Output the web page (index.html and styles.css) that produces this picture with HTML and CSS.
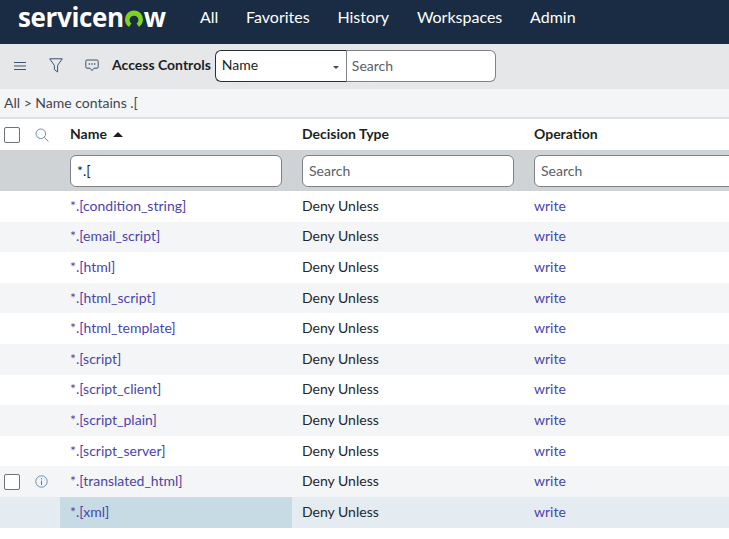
FILE: index.html
```html
<!DOCTYPE html>
<html lang="en">
<head>
<meta charset="utf-8">
<title>Access Controls</title>
<link rel="stylesheet" href="styles.css">
</head>
<body>
<header class="topbar">
  <div class="logo">servicen<svg class="logo-o" viewBox="0 0 20 20" width="20" height="20"><path d="M5 18A9 9 0 1 1 15 18L12.6 14.6A4.4 4.4 0 1 0 7.4 14.6Z" fill="#7ed321"/></svg>w</div>
  <nav class="nav"><span>All</span><span>Favorites</span><span>History</span><span>Workspaces</span><span>Admin</span></nav>
</header>
<div class="toolbar">
  <svg class="tool-menu" width="12" height="10" viewBox="0 0 12 10"><path d="M0 1.5H12M0 5H12M0 8.5H12" stroke="#3e5570" stroke-width="1.1" fill="none"/></svg>
  <svg class="tool-filter" width="14" height="15" viewBox="0 0 14 15"><path d="M.7.8H13.3L8.6 7.4V14L5.4 11.6V7.4Z" stroke="#3e5570" stroke-width="1" fill="none"/></svg>
  <svg class="tool-chat" width="14" height="13" viewBox="0 0 14 13"><path d="M2 1H12A1.2 1.2 0 0 1 13.2 2.2V8A1.2 1.2 0 0 1 12 9.2H9L7 11.6 5 9.2H2A1.2 1.2 0 0 1 .8 8V2.2A1.2 1.2 0 0 1 2 1Z" stroke="#3e5570" stroke-width="1" fill="none"/><path d="M3.7 5H5M6.4 5H7.7M9 5H10.3" stroke="#3e5570" stroke-width="1.3"/></svg>
  <span class="title">Access Controls</span>
  <div class="search-group">
    <div class="select">Name<span class="caret"></span></div>
    <div class="search-box">Search</div>
  </div>
</div>
<div class="breadcrumb">All &gt; Name contains .[</div>
<table class="list">
  <colgroup><col class="c-check"><col class="c-icon"><col class="c-data"><col class="c-data"><col></colgroup>
  <thead>
    <tr class="head-row">
      <th><span class="checkbox"></span></th>
      <th><svg class="ic-search" width="14" height="14" viewBox="0 0 14 14"><circle cx="5.8" cy="5.8" r="4.8" stroke="#6b8fb5" fill="none"/><path d="M9.3 9.3L13.4 13.4" stroke="#6b8fb5"/></svg></th>
      <th class="th-text">Name<span class="sort-up"></span></th>
      <th class="th-text">Decision Type</th>
      <th class="th-text">Operation</th>
    </tr>
    <tr class="filter-row">
      <td></td><td></td>
      <td><div class="field value">*.[</div></td>
      <td><div class="field">Search</div></td>
      <td class="clip"><div class="field wide">Search</div></td>
    </tr>
  </thead>
  <tbody>
    <tr><td></td><td></td><td class="link">*.[condition_string]</td><td class="plain">Deny Unless</td><td class="link">write</td></tr>
    <tr><td></td><td></td><td class="link">*.[email_script]</td><td class="plain">Deny Unless</td><td class="link">write</td></tr>
    <tr><td></td><td></td><td class="link">*.[html]</td><td class="plain">Deny Unless</td><td class="link">write</td></tr>
    <tr><td></td><td></td><td class="link">*.[html_script]</td><td class="plain">Deny Unless</td><td class="link">write</td></tr>
    <tr><td></td><td></td><td class="link">*.[html_template]</td><td class="plain">Deny Unless</td><td class="link">write</td></tr>
    <tr><td></td><td></td><td class="link">*.[script]</td><td class="plain">Deny Unless</td><td class="link">write</td></tr>
    <tr><td></td><td></td><td class="link">*.[script_client]</td><td class="plain">Deny Unless</td><td class="link">write</td></tr>
    <tr><td></td><td></td><td class="link">*.[script_plain]</td><td class="plain">Deny Unless</td><td class="link">write</td></tr>
    <tr><td></td><td></td><td class="link">*.[script_server]</td><td class="plain">Deny Unless</td><td class="link">write</td></tr>
    <tr>
      <td><span class="checkbox"></span></td>
      <td><svg class="ic-info" width="13" height="13" viewBox="0 0 13 13"><circle cx="6.5" cy="6.5" r="5.7" stroke="#6b8fb5" fill="none"/><path d="M6.5 5.6V10" stroke="#5f7f9f" stroke-width="1.1"/><path d="M6.5 3V4.3" stroke="#5f7f9f" stroke-width="1.1"/></svg></td>
      <td class="link">*.[translated_html]</td><td class="plain">Deny Unless</td><td class="link">write</td>
    </tr>
    <tr class="selected"><td></td><td></td><td class="link sel-cell">*.[xml]</td><td class="plain">Deny Unless</td><td class="link">write</td></tr>
  </tbody>
</table>
</body>
</html>
```
FILE: styles.css
```css
* { box-sizing: border-box; }
html, body { margin: 0; padding: 0; }
body {
  width: 729px;
  height: 539px;
  overflow: hidden;
  background: #fff;
  color: #1b1f24;
  font-family: Lato, "Liberation Sans", sans-serif;
  font-size: 14px;
}

.topbar {
  display: flex;
  align-items: flex-start;
  height: 44px;
  background: #1a2c43;
  color: #fff;
}
.logo {
  display: flex;
  align-items: center;
  margin: 0 0 0 18px;
  width: 182px;
  height: 34px;
  font-family: "Open Sans", sans-serif;
  font-size: 26px;
  font-weight: 700;
  letter-spacing: -0.35px;
  line-height: 34px;
}
.logo-o { margin: 3px 0 0 0; flex: none; }
.nav {
  display: flex;
  gap: 27.75px;
  font-size: 16px;
  line-height: 34px;
}

.toolbar {
  display: flex;
  align-items: center;
  height: 45px;
  padding: 0 0 2px 14px;
  background: #e6e7e9;
}
.tool-menu { margin-right: 23px; }
.tool-filter { margin-right: 22px; }
.tool-chat { margin-right: 13px; }
.title {
  margin-right: 4px;
  padding-bottom: 2px;
  font-weight: 700;
  font-size: 14px;
  white-space: nowrap;
}
.search-group { display: flex; }
.select, .search-box {
  height: 32px;
  background: #fff;
  border: 1px solid #7e8288;
  font-size: 14px;
}
.select {
  position: relative;
  width: 132px;
  padding-left: 6px;
  border: 1px solid #2a2f35;
  border-right-color: #7e8288;
  border-radius: 6px 0 0 6px;
  line-height: 27px;
}
.caret {
  position: absolute;
  right: 7px;
  top: 15px;
  border: 3px solid transparent;
  border-top: 3px solid #3e4650;
  border-bottom: 0;
}
.search-box {
  width: 150px;
  margin-left: -1px;
  padding-left: 6px;
  border-left: 0;
  border-radius: 0 6px 6px 0;
  color: #5a6068;
  line-height: 29px;
}

.breadcrumb {
  height: 30px;
  padding-left: 4px;
  background: #f4f5f7;
  border-bottom: 2px solid #dfe1e4;
  line-height: 27px;
  color: #3f4650;
  font-size: 14px;
}

.list {
  width: 729px;
  table-layout: fixed;
  border-collapse: collapse;
}
.c-check { width: 28px; }
.c-icon { width: 32px; }
.c-data { width: 232px; }
.list th, .list td {
  padding: 0 0 0 10px;
  text-align: left;
  white-space: nowrap;
}
.list th:first-child, .list td:first-child { padding-left: 4px; }
.list th:nth-child(2), .list td:nth-child(2) { padding-left: 7px; }
.list td.link, .list td.plain, .list th.th-text { padding-bottom: 2px; }
.head-row { height: 31px; }
.head-row th { font-weight: 700; font-size: 14px; vertical-align: middle; }
.sort-up {
  display: inline-block;
  margin-left: 6px;
  vertical-align: 2px;
  border: 5px solid transparent;
  border-bottom: 5px solid #1b1f24;
  border-top: 0;
}
.checkbox {
  display: block;
  width: 16px;
  height: 16px;
  background: #fff;
  border: 1px solid #6d7278;
  border-radius: 2px;
}
.ic-search, .ic-info { display: block; }

.filter-row { height: 41px; background: #d0d3d6; }
.field {
  width: 212px;
  height: 32px;
  padding-left: 6px;
  background: #fff;
  border: 1px solid #7e8288;
  border-radius: 6px;
  line-height: 30px;
  color: #5a6068;
  font-size: 14px;
}
.field.value { color: #1b1f24; }
.field.wide { width: 240px; }
.clip { overflow: hidden; }

tbody tr { height: 30.6px; }
tbody tr:nth-child(even) { background: #f4f5f7; }
tbody td { color: #22272d; font-size: 14px; }
tbody td.link { color: #4b45a8; }
tbody tr.selected { background: #e4ecf1; }
tbody td.sel-cell { background: #c7dbe4; }
```
